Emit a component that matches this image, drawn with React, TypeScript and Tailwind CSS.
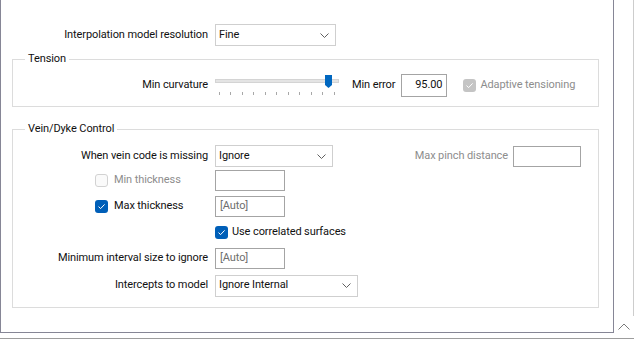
import React from "react"

const font = { fontFamily: 'Roboto, "Segoe UI", sans-serif' }

const Chevron = () => (
  <svg width="9" height="5" viewBox="0 0 9 5" className="shrink-0">
    <path d="M0.5 0.5 L4.5 4.5 L8.5 0.5" fill="none" stroke="#606060" strokeWidth="1" />
  </svg>
)

const Select = ({ value, width }: { value: string; width: string }) => (
  <div
    className={`${width} h-[22px] flex items-center justify-between border border-[#cfcfcf] bg-white pl-[3px] pr-[6px] text-[#111]`}
  >
    <span>{value}</span>
    <Chevron />
  </div>
)

const Input = ({
  value,
  width,
  gray,
  right,
}: {
  value?: string
  width: string
  gray?: boolean
  right?: boolean
}) => (
  <div
    className={`${width} h-[21px] flex items-center border border-[#a4a4a4] bg-white px-[4px] ${
      right ? "justify-end" : ""
    } ${gray ? "text-[#6e6e6e]" : "text-[#111]"}`}
  >
    {value}
  </div>
)

type BoxState = "checked" | "disabledChecked" | "disabled"

const CheckBox = ({ state }: { state: BoxState }) => {
  if (state === "disabled") {
    return <div className="w-[13px] h-[13px] shrink-0 rounded-[3px] border border-[#d2d2d2] bg-[#fafafa]" />
  }
  const bg = state === "checked" ? "bg-[#005fb8]" : "bg-[#c4c4c4]"
  return (
    <div className={`w-[13px] h-[13px] shrink-0 rounded-[3px] ${bg} flex items-center justify-center`}>
      <svg width="9" height="7" viewBox="0 0 9 7">
        <path d="M1.5 3.6 L3.6 5.6 L7.6 1.4" fill="none" stroke="white" strokeWidth="1" />
      </svg>
    </div>
  )
}

const Slider = () => {
  const ticks = Array.from({ length: 11 }, (_, i) => 3.5 + i * 11.5)
  return (
    <svg width="124" height="24" viewBox="0 0 124 24" className="shrink-0">
      <rect x="0.5" y="6.5" width="123" height="3" fill="#e4e4e4" stroke="#d4d4d4" />
      {ticks.map((x) => (
        <line key={x} x1={Math.round(x) + 0.5} y1="19" x2={Math.round(x) + 0.5} y2="22" stroke="#a8a8a8" />
      ))}
      <path d="M110 2 H117 V12 L113.5 15 L110 12 Z" fill="#0067c0" />
    </svg>
  )
}

const Legend = ({ children }: { children: React.ReactNode }) => (
  <legend className="ml-[12px] px-[3px] leading-[16px] text-[#111]">{children}</legend>
)

export default function App() {
  return (
    <div
      className="relative w-[634px] h-[339px] overflow-hidden bg-white text-[11px] tracking-[-0.1px] whitespace-nowrap"
      style={font}
    >
      <div className="flex">
        <div className="w-[614px] h-[333px] border-l border-r border-b border-[#868696] pt-[24px]">
          <div className="flex items-center">
            <div className="w-[207px] text-right text-[#111]">Interpolation model resolution</div>
            <div className="ml-[7px]">
              <Select value="Fine" width="w-[121px]" />
            </div>
          </div>

          <fieldset className="ml-[11px] mt-[5px] w-[587px] border border-[#dcdcdc] pt-[6px] pb-[9px]">
            <Legend>Tension</Legend>
            <div className="flex items-center">
              <div className="w-[195px] text-right text-[#111]">Min curvature</div>
              <div className="ml-[7px]">
                <Slider />
              </div>
              <div className="ml-[13px] text-[#111]">Min error</div>
              <div className="ml-[6px]">
                <Input value="95.00" width="w-[46px] h-[23px]" right />
              </div>
              <div className="ml-[16px] flex items-center gap-[4px]">
                <CheckBox state="disabledChecked" />
                <span className="text-[#8d8d8d]">Adaptive tensioning</span>
              </div>
            </div>
          </fieldset>

          <fieldset className="ml-[11px] mt-[14px] w-[587px] border border-[#dcdcdc] pt-[8px] pb-[11px]">
            <Legend>Vein/Dyke Control</Legend>
            <div className="flex items-center h-[22px]">
              <div className="w-[195px] text-right text-[#111]">When vein code is missing</div>
              <div className="ml-[7px]">
                <Select value="Ignore" width="w-[118px]" />
              </div>
              <div className="ml-auto mr-[17px] flex items-center gap-[5px]">
                <span className="text-[#8d8d8d]">Max pinch distance</span>
                <Input width="w-[68px]" />
              </div>
            </div>
            <div className="mt-[3px] flex items-center h-[21px]">
              <div className="w-[195px] pl-[82px] flex items-center gap-[6px]">
                <CheckBox state="disabled" />
                <span className="text-[#8d8d8d]">Min thickness</span>
              </div>
              <div className="ml-[7px]">
                <Input width="w-[70px]" />
              </div>
            </div>
            <div className="mt-[5px] flex items-center h-[21px]">
              <div className="w-[195px] pl-[82px] flex items-center gap-[6px]">
                <CheckBox state="checked" />
                <span className="text-[#111]">Max thickness</span>
              </div>
              <div className="ml-[7px]">
                <Input value="[Auto]" width="w-[70px]" gray />
              </div>
            </div>
            <div className="mt-[5px] flex items-center h-[20px]">
              <div className="ml-[202px] flex items-center gap-[4px]">
                <CheckBox state="checked" />
                <span className="text-[#111]">Use correlated surfaces</span>
              </div>
            </div>
            <div className="mt-[6px] flex items-center h-[21px]">
              <div className="w-[195px] text-right text-[#111]">Minimum interval size to ignore</div>
              <div className="ml-[7px]">
                <Input value="[Auto]" width="w-[70px]" gray />
              </div>
            </div>
            <div className="mt-[6px] flex items-center h-[21px]">
              <div className="w-[195px] text-right text-[#111]">Intercepts to model</div>
              <div className="ml-[7px]">
                <Select value="Ignore Internal" width="w-[143px] h-[21px]" />
              </div>
            </div>
          </fieldset>
        </div>

        <div className="w-[20px] h-[333px] flex flex-col items-end justify-between">
          <div className="w-px h-[316px] bg-[#cdcdcd]" />
          <div className="w-[20px] flex justify-center pb-[3px]">
            <svg width="12" height="7" viewBox="0 0 12 7">
              <path d="M0.5 6.5 L6 1 L11.5 6.5" fill="none" stroke="#7a7a7a" strokeWidth="1" />
            </svg>
          </div>
        </div>
      </div>
      <div className="h-[5px]" />
      <div className="h-px bg-[#9d9d9d]" />
    </div>
  )
}
